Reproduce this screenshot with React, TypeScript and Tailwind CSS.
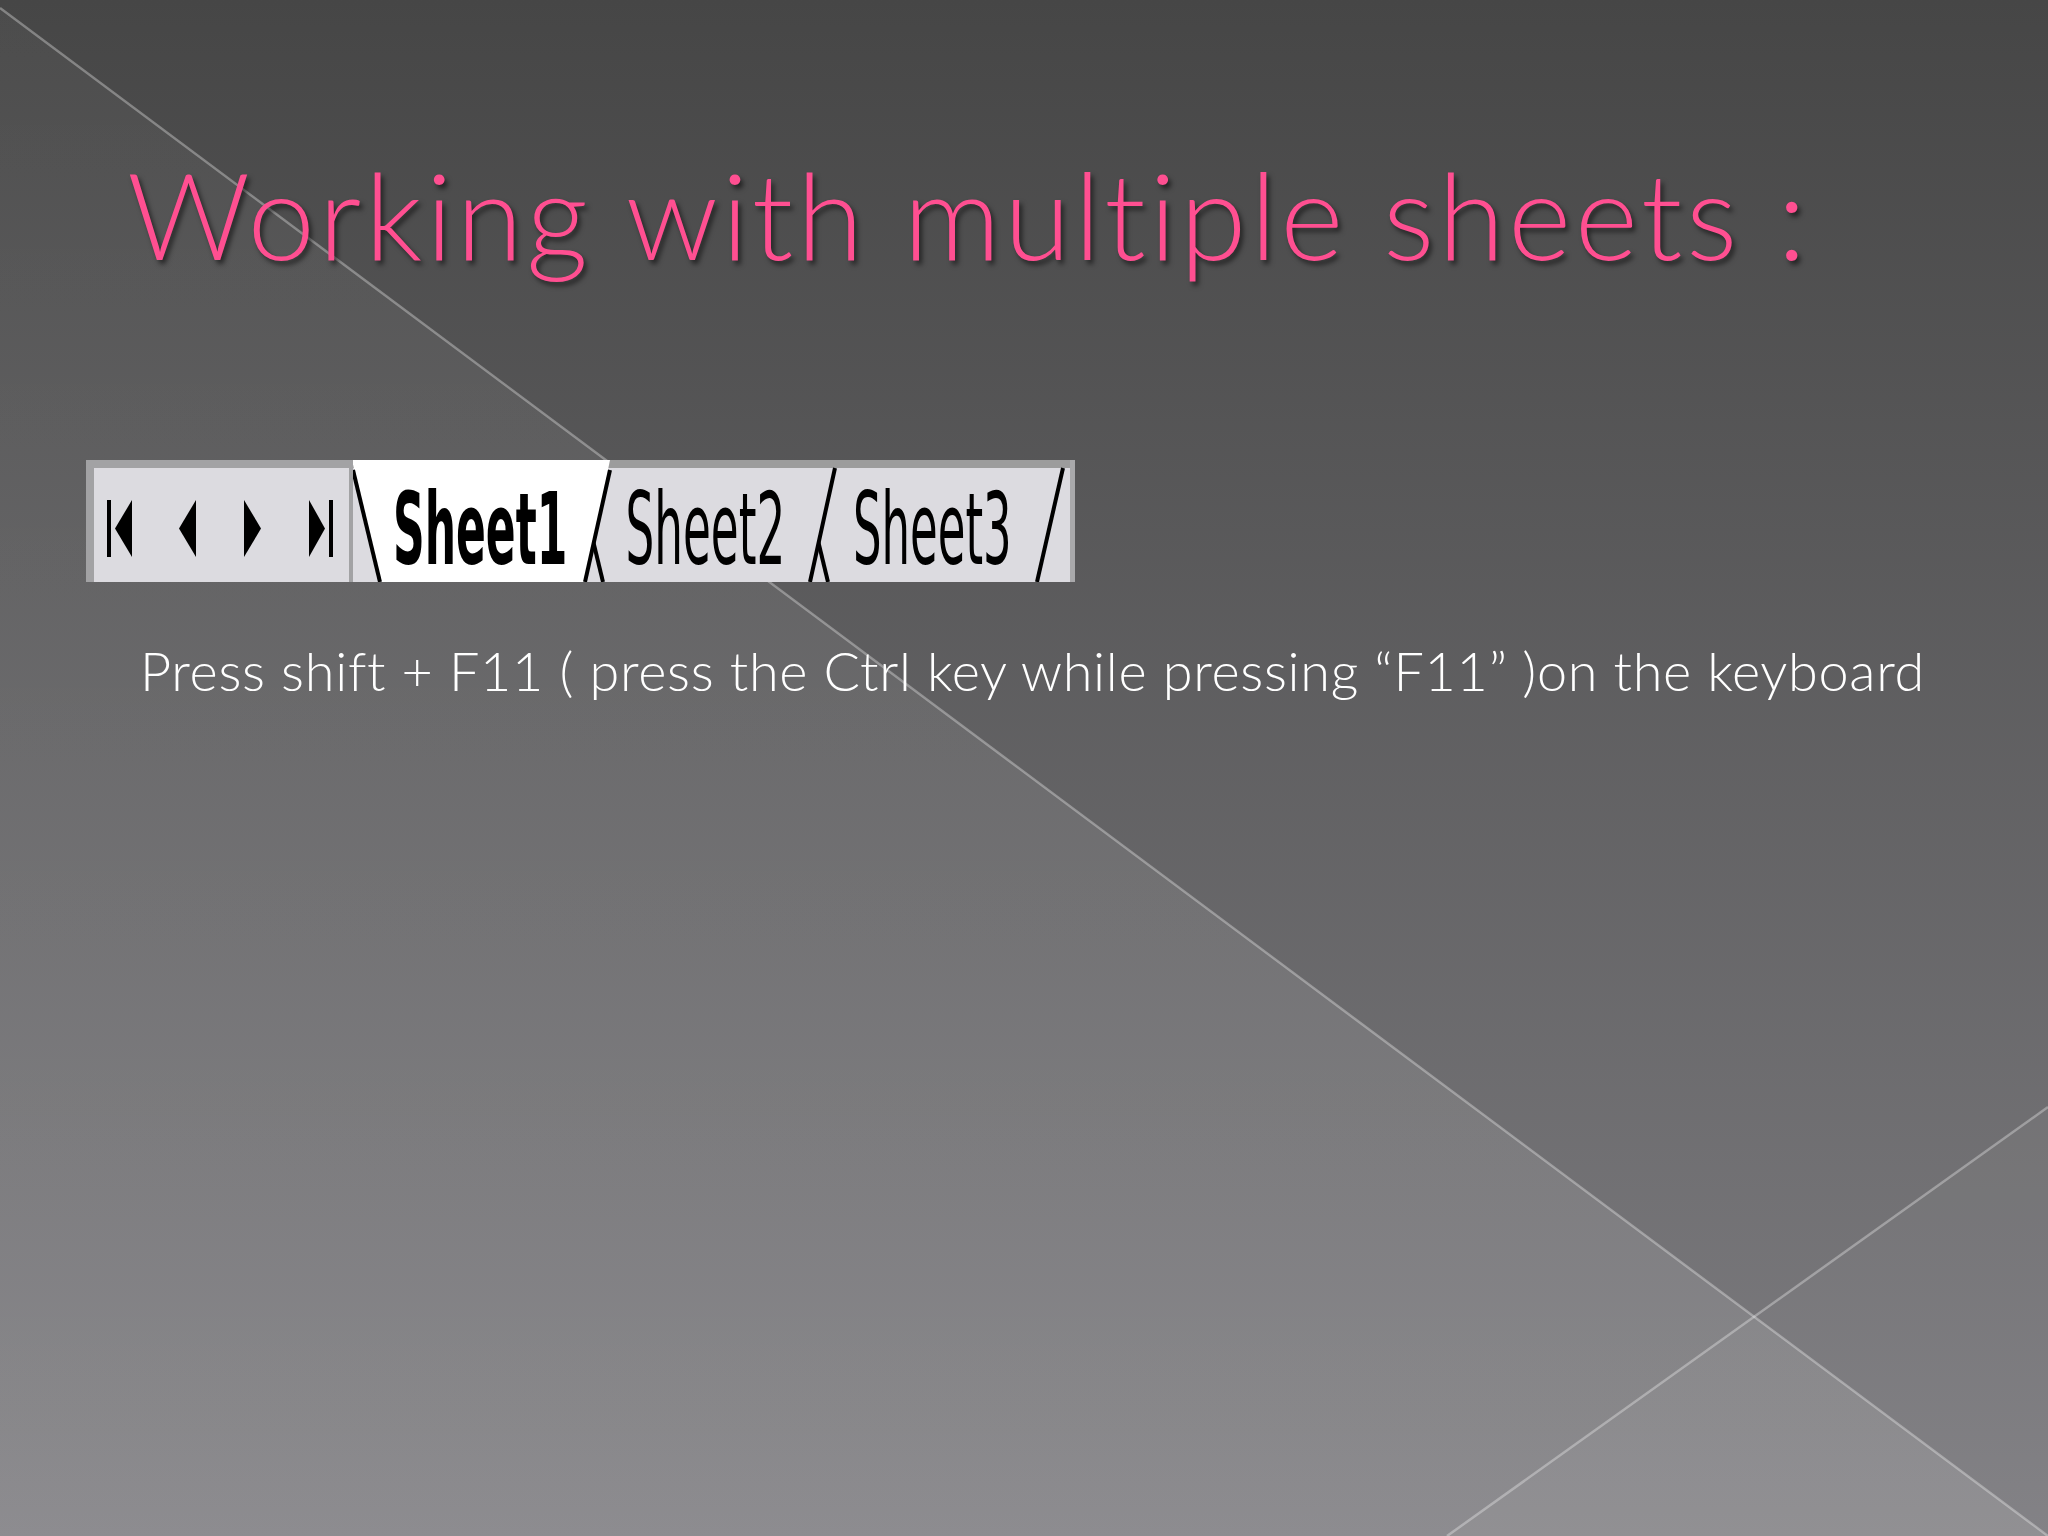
import React from 'react';

// Slide: "Working with multiple sheets" with an old-style sheet tab strip.

function NavIcon({ kind }: { kind: 'first' | 'prev' | 'next' | 'last' }) {
  if (kind === 'first') {
    return (
      <svg width="25" height="57" viewBox="0 0 25 57">
        <rect x="0" y="0" width="4" height="57" fill="#000" />
        <polygon points="8,28.5 25,0 25,57" fill="#000" />
      </svg>
    );
  }
  if (kind === 'prev') {
    return (
      <svg width="17" height="57" viewBox="0 0 17 57">
        <polygon points="0,28.5 17,0 17,57" fill="#000" />
      </svg>
    );
  }
  if (kind === 'next') {
    return (
      <svg width="17" height="57" viewBox="0 0 17 57">
        <polygon points="17,28.5 0,0 0,57" fill="#000" />
      </svg>
    );
  }
  return (
    <svg width="24" height="57" viewBox="0 0 24 57">
      <polygon points="16,28.5 0,0 0,57" fill="#000" />
      <rect x="20" y="0" width="4" height="57" fill="#000" />
    </svg>
  );
}

function TabEdges() {
  // the trapezoid tabs, back to front: Sheet3, Sheet2, Sheet1 (active)
  return (
    <svg
      className="absolute inset-0 h-full w-full"
      viewBox="0 0 722 122"
      preserveAspectRatio="none"
    >
      <rect x="0" y="0" width="722" height="8" fill="#9c9c9c" />
      <rect x="717" y="0" width="5" height="122" fill="#a9a9ab" />

      <polygon points="446,8 710,8 684,122 475,122" fill="#dcdbe0" />
      <line x1="448" y1="10" x2="475" y2="122" stroke="#000" strokeWidth="4" />
      <line x1="710" y1="8" x2="684" y2="122" stroke="#000" strokeWidth="4" />

      <polygon points="221,8 482,8 457,122 250,122" fill="#dcdbe0" />
      <line x1="223" y1="10" x2="250" y2="122" stroke="#000" strokeWidth="4" />
      <line x1="482" y1="8" x2="457" y2="122" stroke="#000" strokeWidth="4" />

      <polygon points="-1,0 257,0 232,122 27,122" fill="#ffffff" />
      <line x1="0" y1="10" x2="27" y2="122" stroke="#000" strokeWidth="4" />
      <line x1="257" y1="10" x2="232" y2="122" stroke="#000" strokeWidth="4" />
    </svg>
  );
}

function SheetTabs() {
  return (
    <div className="ml-[86px] mt-[186px] flex h-[122px] w-[989px]">
      <div className="flex h-full w-[267px] shrink-0 items-start border-l-[8px] border-r-[4px] border-t-[8px] border-[#a2a2a4] bg-[#dcdbe0] pt-[32px]">
        <div className="ml-[13px]">
          <NavIcon kind="first" />
        </div>
        <div className="ml-[47px]">
          <NavIcon kind="prev" />
        </div>
        <div className="ml-[48px]">
          <NavIcon kind="next" />
        </div>
        <div className="ml-[48px]">
          <NavIcon kind="last" />
        </div>
      </div>

      <div className="relative h-full w-[722px] shrink-0 bg-[#dcdbe0]">
        <TabEdges />
        <div className="relative flex items-start pt-[20px] font-['DejaVu_Sans',sans-serif] text-[100px] leading-none text-black">
          <div className="flex w-[254px] justify-center">
            <span className="inline-block scale-x-[0.44] font-bold">Sheet1</span>
          </div>
          <div className="flex w-[196px] justify-center">
            <span className="inline-block scale-x-[0.453]">Sheet2</span>
          </div>
          <div className="flex w-[259px] justify-center">
            <span className="inline-block scale-x-[0.45]">Sheet3</span>
          </div>
        </div>
      </div>
    </div>
  );
}

export default function App() {
  return (
    <div className="relative h-[1536px] w-[2048px] overflow-hidden bg-linear-to-b from-[#464646] to-[#7f7e82]">
      <svg
        className="absolute inset-0 h-full w-full"
        viewBox="0 0 2048 1536"
        preserveAspectRatio="none"
      >
        <defs>
          <linearGradient id="lift" x1="0" y1="0" x2="0" y2="1">
            <stop offset="0" stopColor="#ffffff" stopOpacity="0.03" />
            <stop offset="1" stopColor="#ffffff" stopOpacity="0.11" />
          </linearGradient>
        </defs>
        <polygon points="0,8 2048,1536 0,1536" fill="url(#lift)" />
        <polygon points="1447,1536 2048,1107 2048,1536" fill="#ffffff" fillOpacity="0.035" />
        <line x1="0" y1="8" x2="2048" y2="1536" stroke="#ffffff" strokeOpacity="0.32" strokeWidth="2.5" />
        <line x1="1447" y1="1536" x2="2048" y2="1107" stroke="#ffffff" strokeOpacity="0.32" strokeWidth="2.5" />
      </svg>

      <div className="relative flex flex-col">
        <h1 className="ml-[127px] mt-[153px] font-['Lato',sans-serif] text-[121px] font-light leading-none tracking-[3.5px] whitespace-nowrap text-[#ff4f91] [font-variant-ligatures:none] [text-shadow:3px_4px_5px_rgba(0,0,0,0.55)]">
          Working with multiple sheets :
        </h1>

        <SheetTabs />

        <p className="ml-[140px] mt-[62px] font-['Lato',sans-serif] text-[54px] font-light leading-none tracking-[0.7px] whitespace-nowrap text-white [font-variant-ligatures:none]">
          Press shift + F11 ( press the Ctrl key while pressing “F11” )on the keyboard
        </p>
      </div>
    </div>
  );
}
